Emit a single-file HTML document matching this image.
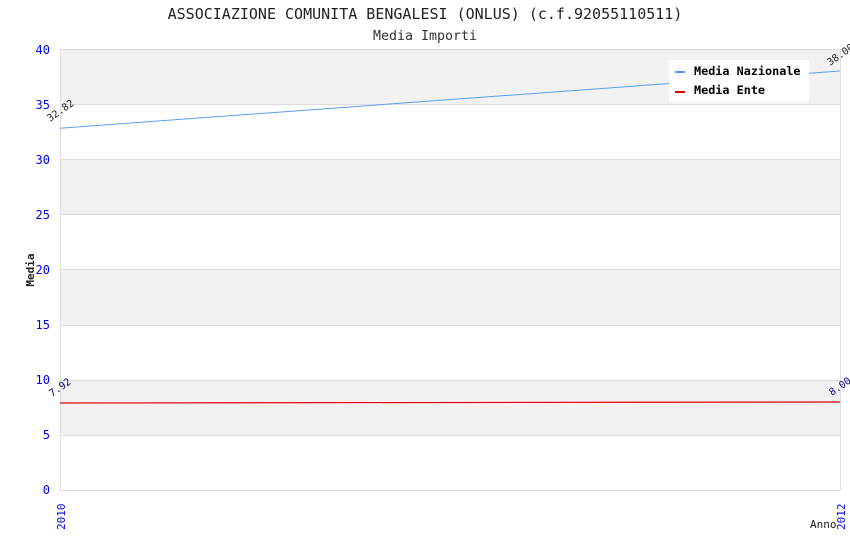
<!DOCTYPE html>
<html><head><meta charset="utf-8"><style>
body{margin:0;background:#fff;width:850px;height:550px;overflow:hidden}
text{font-family:"DejaVu Sans Mono","Liberation Mono",monospace}
</style></head><body>
<svg width="850" height="550" xmlns="http://www.w3.org/2000/svg">
<rect x="60" y="49" width="780" height="55" fill="#f2f2f2"/>
<rect x="60" y="159" width="780" height="55" fill="#f2f2f2"/>
<rect x="60" y="269" width="780" height="56" fill="#f2f2f2"/>
<rect x="60" y="380" width="780" height="55" fill="#f2f2f2"/>
<g stroke="#dddddd" stroke-width="1">
<line x1="60" y1="49.5" x2="840" y2="49.5"/>
<line x1="60" y1="104.5" x2="840" y2="104.5"/>
<line x1="60" y1="159.5" x2="840" y2="159.5"/>
<line x1="60" y1="214.5" x2="840" y2="214.5"/>
<line x1="60" y1="269.5" x2="840" y2="269.5"/>
<line x1="60" y1="325.5" x2="840" y2="325.5"/>
<line x1="60" y1="380.5" x2="840" y2="380.5"/>
<line x1="60" y1="435.5" x2="840" y2="435.5"/>
<line x1="60" y1="490.5" x2="840" y2="490.5"/>
<line x1="60.5" y1="49" x2="60.5" y2="490"/>
<line x1="840.5" y1="49" x2="840.5" y2="490"/>
</g>
<line x1="60" y1="128.2" x2="840" y2="71" stroke="#5aa0f0" stroke-width="1"/>
<line x1="60" y1="403" x2="840" y2="402" stroke="#e00000" stroke-width="1.2"/>
<g font-size="12" fill="#0000ee" text-anchor="end">
<text x="50" y="54">40</text><text x="50" y="109">35</text><text x="50" y="164">30</text>
<text x="50" y="219">25</text><text x="50" y="274">20</text><text x="50" y="329">15</text>
<text x="50" y="384">10</text><text x="50" y="439">5</text><text x="50" y="494">0</text>
</g>
<g font-size="11" fill="#0000ee">
<text transform="translate(65,530) rotate(-90)">2010</text>
<text transform="translate(845,530) rotate(-90)">2012</text>
</g>
<text x="425" y="19" font-size="15" fill="#222" text-anchor="middle">ASSOCIAZIONE COMUNITA BENGALESI (ONLUS) (c.f.92055110511)</text>
<text x="425" y="40" font-size="13.3" fill="#333" text-anchor="middle">Media Importi</text>
<text transform="translate(34,270) rotate(-90)" font-size="11" font-weight="bold" fill="#222" text-anchor="middle">Media</text>
<text x="810" y="528" font-size="11" fill="#222">Anno</text>
<g font-size="10" fill="#222">
<text transform="translate(50,122) rotate(-35)">32.82</text>
<text transform="translate(830,66) rotate(-35)">38.00</text>
</g>
<g font-size="10" fill="#000080">
<text transform="translate(52,397) rotate(-35)">7.92</text>
<text transform="translate(832,396) rotate(-35)">8.00</text>
</g>
<rect x="669" y="60" width="140" height="42" fill="#fff"/>
<rect x="675" y="71" width="10" height="2" fill="#5aa0f0"/>
<rect x="675" y="91" width="10" height="2" fill="#e00000"/>
<g font-size="11.8" font-weight="bold" fill="#000">
<text x="694" y="75">Media Nazionale</text>
<text x="694" y="94">Media Ente</text>
</g>
</svg>
</body></html>
